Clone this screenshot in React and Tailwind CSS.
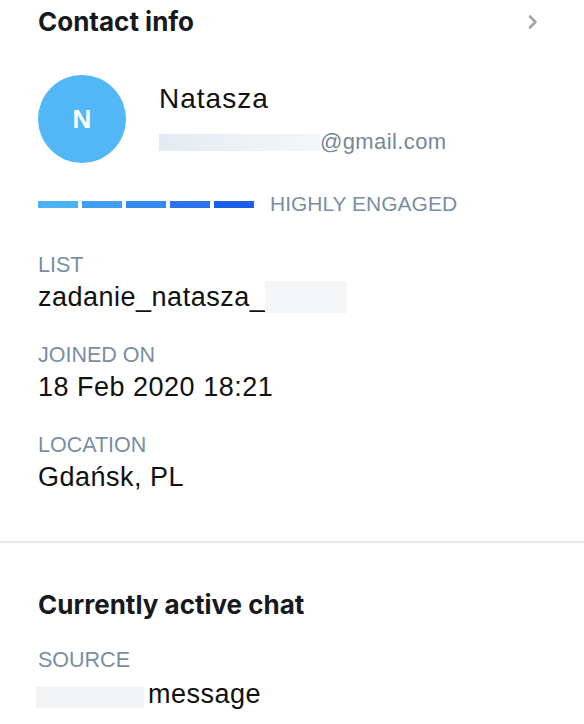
export default function App() {
  const body = { fontFamily: '"Liberation Sans", Arial, sans-serif' };
  const head = { fontFamily: 'Inter, "Liberation Sans", sans-serif' };
  const Field = ({ label, children }) => (
    <div>
      <div className="text-[21.5px] leading-[26px] text-[#7a8ea3]">{label}</div>
      <div className="mt-[4px] flex items-center h-[30px] text-[27px] leading-[30px] tracking-[0.5px] text-[#111]">
        {children}
      </div>
    </div>
  );
  return (
    <div className="w-[584px] h-[724px] bg-white overflow-hidden" style={body}>
      <section className="pl-[38px] pr-[45px] pt-[6px] pb-[49px]">
        <div className="flex items-center justify-between h-[32px]">
          <h2 className="text-[26px] leading-[32px] font-bold text-[#16191d]" style={head}>
            Contact info
          </h2>
          <svg width="12" height="18" viewBox="0 0 12 18" fill="none">
            <path d="M3 3.5 L8.5 9 L3 14.5" stroke="#a3a3a3" strokeWidth="2.6" strokeLinecap="round" strokeLinejoin="round" />
          </svg>
        </div>

        <div className="flex mt-[37px]">
          <div className="w-[88px] h-[88px] rounded-full bg-[#52b7f6] flex items-center justify-center text-white text-[26px] font-bold shrink-0">
            N
          </div>
          <div className="ml-[33px] pt-[7px]">
            <div className="text-[28px] leading-[34px] tracking-[1px] text-[#111]">Natasza</div>
            <div className="mt-[13px] flex items-center h-[26px] text-[22px] leading-[26px] tracking-[0.4px] text-[#75879a]">
              <span className="inline-block w-[161px] h-[17px] bg-gradient-to-r from-[#e2eaf1] via-[#edf1f5] to-[#f4f6f8]" />
              <span>@gmail.com</span>
            </div>
          </div>
        </div>

        <div className="flex items-center h-[26px] mt-[28px]">
          <div className="flex gap-[4px]">
            <div className="w-[40px] h-[7px] bg-[#4cb4f6]" />
            <div className="w-[40px] h-[7px] bg-[#3f9ef2]" />
            <div className="w-[40px] h-[7px] bg-[#358aef]" />
            <div className="w-[40px] h-[7px] bg-[#2b74ec]" />
            <div className="w-[40px] h-[7px] bg-[#1d5ee9]" />
          </div>
          <div className="ml-[16px] text-[21px] leading-[26px] text-[#7a8ea3]">HIGHLY ENGAGED</div>
        </div>

        <div className="mt-[35px] flex flex-col gap-[30px]">
          <Field label="LIST">
            <span>zadanie_natasza_</span>
            <span className="inline-block w-[82px] h-[32px] bg-[#f3f5f7]" />
          </Field>
          <Field label="JOINED ON">18 Feb 2020 18:21</Field>
          <Field label="LOCATION">Gdańsk, PL</Field>
        </div>
      </section>

      <div className="h-[2px] bg-[#e8e8e8]" />

      <section className="pl-[38px] pr-[46px] pt-[46px]">
        <h2 className="text-[26px] leading-[32px] font-bold text-[#16191d]" style={head}>
          Currently active chat
        </h2>
        <div className="mt-[26px]">
          <div className="text-[21.5px] leading-[26px] text-[#7a8ea3]">SOURCE</div>
          <div className="mt-[6px] flex items-center h-[30px] text-[27px] leading-[30px] tracking-[0.5px] text-[#111]">
            <span className="inline-block -ml-[2px] w-[108px] h-[21px] bg-[#f2f3f5] mt-[6px]" />
            <span className="ml-[4px]">message</span>
          </div>
        </div>
      </section>
    </div>
  );
}
